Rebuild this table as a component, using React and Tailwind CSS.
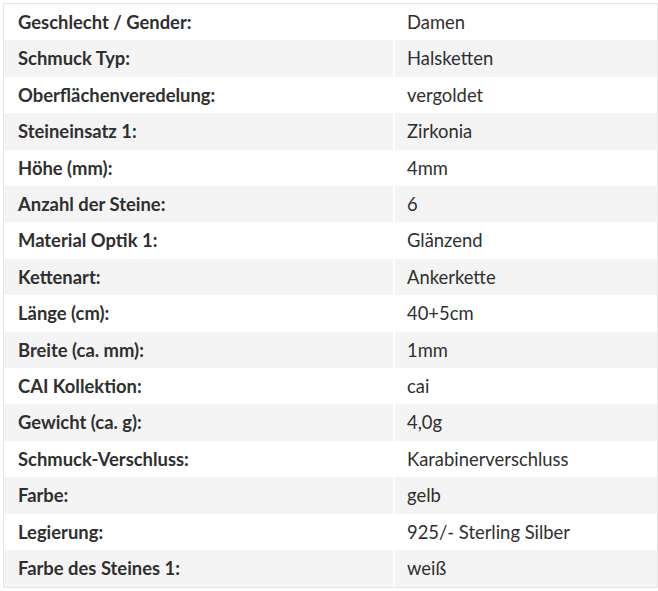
const rows = [
  ['Geschlecht / Gender:', 'Damen'],
  ['Schmuck Typ:', 'Halsketten'],
  ['Oberflächenveredelung:', 'vergoldet'],
  ['Steineinsatz 1:', 'Zirkonia'],
  ['Höhe (mm):', '4mm'],
  ['Anzahl der Steine:', '6'],
  ['Material Optik 1:', 'Glänzend'],
  ['Kettenart:', 'Ankerkette'],
  ['Länge (cm):', '40+5cm'],
  ['Breite (ca. mm):', '1mm'],
  ['CAI Kollektion:', 'cai'],
  ['Gewicht (ca. g):', '4,0g'],
  ['Schmuck-Verschluss:', 'Karabinerverschluss'],
  ['Farbe:', 'gelb'],
  ['Legierung:', '925/- Sterling Silber'],
  ['Farbe des Steines 1:', 'weiß'],
]

export default function App() {
  return (
    <div className="bg-white min-h-[591px] pt-[3px] pl-[3px]" style={{ fontFamily: 'Lato, "Open Sans", sans-serif' }}>
      <table className="w-[655px] border border-[#e6e6e6] border-separate border-spacing-0 text-[18.4px] leading-[22.4px] text-[#2f2f2f]">
        <tbody>
          {rows.map(([label, value], i) => (
            <tr key={label} className={i % 2 === 1 ? 'bg-[#f4f4f4]' : 'bg-white'}>
              <td className="w-[391px] py-[7px] pl-[14px] font-bold border-r-2 border-white">{label}</td>
              <td className="py-[7px] pl-[12px]">{value}</td>
            </tr>
          ))}
        </tbody>
      </table>
    </div>
  )
}
